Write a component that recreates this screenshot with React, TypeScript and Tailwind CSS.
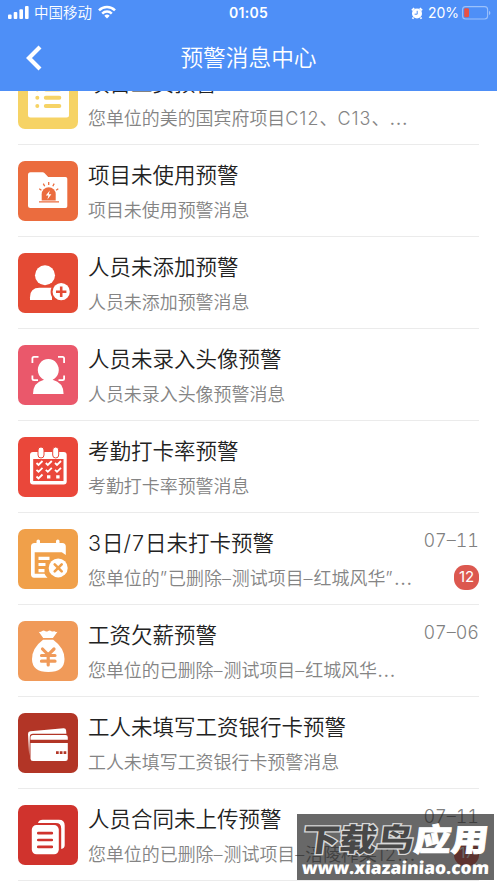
import React from 'react';

interface Warning {
    id: number;
    title: string;
    desc: string;
    color: string;
    icon: React.ReactNode;
    date?: string;
    count?: number;
}

const warnings: Warning[] = [
    {
        id: 1,
        title: '项目工资预警',
        desc: '您单位的美的国宾府项目C12、C13、…',
        color: 'bg-[#f6d365]',
        icon: (
            <>
                <rect x="10" y="11" width="41" height="37.5" rx="2.5" fill="#fff" />
                <g stroke="#f6d365" strokeWidth="4" strokeLinecap="round">
                    <path d="M19.3 20.5h.01M27.8 20.5h13.5M19.3 28.8h.01M27.8 28.8h13.5M19.3 37h.01M27.8 37h13.5" />
                </g>
            </>
        ),
    },
    {
        id: 2,
        title: '项目未使用预警',
        desc: '项目未使用预警消息',
        color: 'bg-[#eb6c3e]',
        icon: (
            <>
                <path d="M12.5 11.3h12.2q1 0 1.7.8l3.8 3.9h17.3q1.8 0 1.8 1.8v27.4q0 1.8-1.8 1.8h-35q-2.5 0-2.5-2.5V13.8q0-2.5 2.5-2.5z" fill="#fff" />
                <path d="M23.7 39.5v-6.3a7 7 0 0 1 14 0v6.3z" fill="#eb6c3e" />
                <path d="M21 40.8h20M21.2 27.7l2.2 1.5M25.3 22.6l1.4 2.6M30.7 21v3M36.2 22.6l-1.4 2.6M40.3 27.7l-2.2 1.5" stroke="#eb6c3e" strokeWidth="1.3" />
                <path d="M31.8 29.5l-4 5h2.6l-1 4 4-5.2h-2.6z" fill="#fff" />
            </>
        ),
    },
    {
        id: 3,
        title: '人员未添加预警',
        desc: '人员未添加预警消息',
        color: 'bg-[#e44a34]',
        icon: (
            <>
                <circle cx="27" cy="22.3" r="10" fill="#fff" />
                <path d="M12 47v-2.8q0-9.5 9.5-9.5h12.5v12.3z" fill="#fff" />
                <circle cx="43.2" cy="38.7" r="10.6" fill="#e44a34" />
                <circle cx="43.2" cy="38.7" r="8.6" fill="#fff" />
                <path d="M43.2 33.5v10.4M38 38.7h10.4" stroke="#e44a34" strokeWidth="2.6" />
            </>
        ),
    },
    {
        id: 4,
        title: '人员未录入头像预警',
        desc: '人员未录入头像预警消息',
        color: 'bg-[#ea586b]',
        icon: (
            <>
                <path d="M14.4 18v-4.5q0-1.6 1.6-1.6h4.5M40 11.9h4.5q1.6 0 1.6 1.6V18M14.4 30.5v3q0 1.6 1.6 1.6h4M46.1 30.5v3q0 1.6-1.6 1.6h-4" fill="none" stroke="#fff" strokeWidth="1.8" />
                <path d="M15 49q0-11.5 11-14.2a10.5 10.9 0 1 1 8.6 0Q45.6 37.5 45.6 49z" fill="#fff" />
            </>
        ),
    },
    {
        id: 5,
        title: '考勤打卡率预警',
        desc: '考勤打卡率预警消息',
        color: 'bg-[#ea473a]',
        icon: (
            <>
                <rect x="12" y="15" width="36.7" height="32.5" rx="3" fill="#fff" />
                <rect x="15.2" y="22" width="30.3" height="22" fill="#ea473a" />
                <rect x="20" y="10" width="6" height="11" rx="3" fill="#fff" stroke="#ea473a" />
                <rect x="34.7" y="10" width="6" height="11" rx="3" fill="#fff" stroke="#ea473a" />
                <path d="M18.5 26l2 2 4-4M27.8 26l2 2 4-4M37 26l2 2 4-4M18.5 32.8l2 2 4-4M27.8 32.8l2 2 4-4M37 32.8l2 2 4-4M18.5 39.5l2 2 4-4" fill="none" stroke="#fff" strokeWidth="1.8" />
                <path d="M29 38.2h3.4v3.4H29zM38.2 38.2h3.4v3.4h-3.4z" fill="#fff" />
            </>
        ),
    },
    {
        id: 6,
        title: '3日/7日未打卡预警',
        desc: '您单位的”已删除–测试项目–红城风华”…',
        color: 'bg-[#f0a04a]',
        date: '07–11',
        count: 12,
        icon: (
            <>
                <path d="M18.5 14v-2q0-1.6 1.8-1.6T22 12v2h16v-2q0-1.6 1.8-1.6T41.5 12v2h2.7q3.600 0 3.600 3.600V26l-4-2.800H16.700v21.500h9.800q1.500 3 3 4.100H16q-3-.3-3-3.300V17.600q0-3.600 3.600-3.600z" fill="#fff" />
                <path d="M20.5 29.300h11M20.500 35.500h7M20.500 41.700h6" stroke="#fff" strokeWidth="3.2" />
                <circle cx="40.2" cy="38.9" r="11.2" fill="#f0a04a" />
                <circle cx="40.2" cy="38.9" r="9.5" fill="#fff" />
                <path d="M36.7 35.4l7 7M43.7 35.4l-7 7" stroke="#f0a04a" strokeWidth="2.6" strokeLinecap="round" />
            </>
        ),
    },
    {
        id: 7,
        title: '工资欠薪预警',
        desc: '您单位的已删除–测试项目–红城风华…',
        color: 'bg-[#f09a59]',
        date: '07–06',
        icon: (
            <>
                <path d="M20.7 10.8q2.2.4 3.4-.8 1.600-1 3 0 1.500 1 3 0t3 0q1.300 1 3 0 1.200 1.200 3.400.8L34.900 17H25.200z" fill="#fff" />
                <path d="M25 18.7h10.200q11.300 8.300 11.300 19.300 0 13-16.200 13T14 38q0-11 11-19.300z" fill="#fff" />
                <path d="M24.5 28l5.700 5.800L36 28M30.200 34v10M23.500 34.500h13.500M23.500 40.200h13.500" fill="none" stroke="#f09a59" strokeWidth="3.2" strokeLinecap="round" />
            </>
        ),
    },
    {
        id: 8,
        title: '工人未填写工资银行卡预警',
        desc: '工人未填写工资银行卡预警消息',
        color: 'bg-[#b23526]',
        icon: (
            <>
                <path d="M11.2 43l-1.2-22q-.1-2.500 2.400-2.800l33-3q2.500-.2 2.700 2l.3 3.500H15q-3.200 0-3.200 3.200z" fill="#fff" />
                <path d="M15 22h32.500q2.300 0 2.300 2.300v2.500H12.500v-2.300Q12.500 22 15 22zM12.500 30h37.300v15.700q0 2.400-2.400 2.400H15q-2.500 0-2.500-2.400z" fill="#fff" />
                <path d="M38 38.3h2.700v2.700H38zM41.800 38.300h2.700v2.700h-2.700zM45.600 38.300h2.700v2.700h-2.700z" fill="#b23526" />
            </>
        ),
    },
    {
        id: 9,
        title: '人员合同未上传预警',
        desc: '您单位的已删除–测试项目–涪陵榨菜12…',
        color: 'bg-[#d0332d]',
        date: '07–11',
        count: 17,
        icon: (
            <>
                <path d="M20 18q1-3.300 4.600-3.300h16.300q5.800 0 5.800 5.800v19.700q0 3-3.500 3.800V23.400q0-5.400-5.400-5.400z" fill="#fff" />
                <rect x="13.8" y="20" width="27" height="29.3" rx="4.7" fill="#fff" />
                <path d="M20.300 28.200h13.500M20.300 35h13.500M20.300 41.900h13.500" stroke="#d0332d" strokeWidth="2.7" strokeLinecap="round" />
            </>
        ),
    },
];

// latin runs are set a little looser than the chinese text
const MixedText: React.FC<{ text: string }> = ({ text }) => (
    <>
        {text.split(/([A-Z0-9/–”]+|…)/).map((part, i) => {
            if (part === '…') {
                return <span key={i} className="text-[22px] leading-none">{part}</span>;
            }
            return i % 2 === 1 ? <span key={i} className="tracking-[1px]">{part}</span> : part;
        })}
    </>
);

const StatusBar: React.FC = () => (
    <div className="relative flex h-[26px] items-center justify-between pl-2 pr-[6px] text-[14.5px] leading-none">
        <div className="flex items-center">
            <svg className="-mt-px" width="21" height="13" viewBox="0 0 21 13" fill="#fff">
                <rect x="0" y="8.5" width="3.6" height="4.5" rx="1" />
                <rect x="5.7" y="6" width="3.6" height="7" rx="1" />
                <rect x="11.4" y="3.3" width="3.6" height="9.7" rx="1" />
                <rect x="17" y="0" width="3.6" height="13" rx="1" />
            </svg>
            <span className="ml-[5px] pt-px font-[350]">中国移动</span>
            <svg className="-mt-[2px] ml-[6px]" width="18" height="14" viewBox="0 0 18 14" fill="none" stroke="#fff" strokeWidth="2.5">
                <path d="M1 5.300a11.300 11.300 0 0 1 16 0M4.200 8.600a6.800 6.800 0 0 1 9.600 0" />
                <path d="M9 13.500L6.300 10.800a3.800 3.800 0 0 1 5.400 0z" fill="#fff" stroke="none" />
            </svg>
        </div>
        <span className="absolute left-1/2 -translate-x-1/2 text-[14px] font-semibold tracking-[0.3px]">01:05</span>
        <div className="flex items-center">
            <svg width="12" height="13" viewBox="0 0 12 13">
                <circle cx="6" cy="6.5" r="5" fill="#fff" />
                <path d="M.9 3.300L3.200 1.200M11.100 3.300L8.800 1.200M2.500 10.500l-1 1.300M9.500 10.500l1 1.300" stroke="#fff" strokeWidth="1.8" />
                <path d="M6.2 3.800v3.400H3.600" fill="none" stroke="#4e8ff7" strokeWidth="1" />
            </svg>
            <span className="ml-[5px] text-[14px]">20%</span>
            <svg className="-mt-px ml-[3px]" width="29" height="14" viewBox="0 0 29 14">
                <rect x=".6" y=".6" width="25" height="12.4" rx="3" fill="none" stroke="#9cc1fb" strokeWidth="1.1" />
                <rect x="2.2" y="2.3" width="4.8" height="9" rx="1.2" fill="#e85146" />
                <path d="M27 4.700q1.400.7 1.400 2.200T27 9.100z" fill="#9cc1fb" />
            </svg>
        </div>
    </div>
);

const WarningRow: React.FC<{ item: Warning }> = ({ item }) => (
    <li className="flex h-[92px] shrink-0 border-b border-[#ebebeb] pt-4">
        <svg className={`size-[60px] shrink-0 rounded-[7px] ${item.color}`} viewBox="0 0 60 60">
            {item.icon}
        </svg>
        <div className="-mt-px ml-[10px] min-w-0 flex-1 whitespace-nowrap">
            <div className="flex justify-between">
                <h3 className="text-[21.5px] font-[350] leading-[30px] text-[#222]">
                    <MixedText text={item.title} />
                </h3>
                {item.date && (
                    <span className="pt-[3px] text-[18px] font-[350] leading-5 text-[#808080] tabular-nums">
                        {item.date}
                    </span>
                )}
            </div>
            <div className="mt-[6px] flex h-7 items-center justify-between">
                <p className="pt-px text-[17.95px] font-[350] leading-[28px] text-[#848484]">
                    <MixedText text={item.desc} />
                </p>
                {item.count && (
                    <span className="-mt-px flex size-[25px] items-center justify-center rounded-[11px] bg-[#dc584f] text-[15px] text-white">
                        {item.count}
                    </span>
                )}
            </div>
        </div>
    </li>
);

const Watermark: React.FC = () => (
    <div className="absolute left-[297px] top-[814px] h-[66px] w-[197px] overflow-hidden bg-[#202020]/68 text-center text-white">
        <div className="mt-[6px] origin-center -skew-x-6 scale-y-[0.84] whitespace-nowrap text-[37.2px] font-black leading-[40px]">
            <span className="text-[#484848] [-webkit-text-stroke:3px_#d8d8d8] [paint-order:stroke_fill]">下载鸟</span>
            <span className="[-webkit-text-stroke:1px_#fff]">应用</span>
        </div>
        <div className="-mt-[3px] -skew-x-3 whitespace-nowrap font-['Open_Sans',sans-serif] text-[17.4px] font-extrabold leading-[20px]">
            www.xiazainiao.com
        </div>
    </div>
);

export default function App() {
    return (
        <div className="relative flex h-[883px] w-[497px] flex-col overflow-hidden bg-white font-[Inter,'Noto_Sans_CJK_SC',sans-serif]">
            <header className="z-10 h-[91px] shrink-0 bg-[#4e8ff7] text-white">
                <StatusBar />
                <div className="relative flex h-[65px] items-center justify-center">
                    <svg className="absolute left-[26px] top-[19px]" width="16" height="26" viewBox="0 0 16 26" fill="none" stroke="#fff" strokeWidth="4.2">
                        <path d="M14 2L3 13l11 11" />
                    </svg>
                    <h1 className="-mt-px text-[22.7px] font-[350] leading-8">预警消息中心</h1>
                </div>
            </header>
            <ul className="-mt-[38px] flex flex-col px-[18px]">
                {warnings.map(item => (
                    <WarningRow key={item.id} item={item} />
                ))}
            </ul>
            <Watermark />
        </div>
    );
}
